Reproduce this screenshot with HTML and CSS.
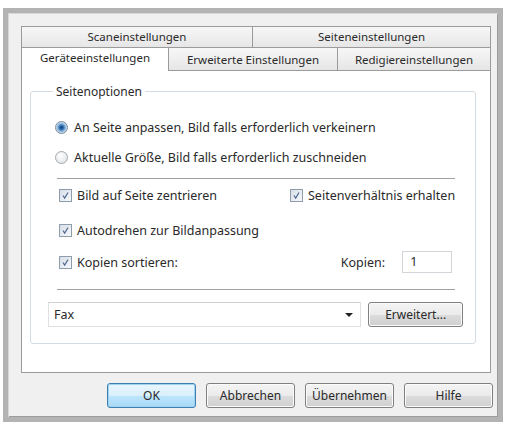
FILE: index.html
```html
<!DOCTYPE html>
<html lang="de">
<head>
    <meta charset="UTF-8">
    <meta name="viewport" content="width=device-width, initial-scale=1.0">
    <title>Druckeinstellungen</title>
    <link rel="stylesheet" href="styles.css">
</head>
<body>
<div class="window">
    <div class="tabs">
        <div class="tab-row back">
            <div class="tab scan">Scaneinstellungen</div>
            <div class="tab page">Seiteneinstellungen</div>
        </div>
        <div class="tab-row front">
            <div class="tab device active">Geräteeinstellungen</div>
            <div class="tab advanced">Erweiterte Einstellungen</div>
            <div class="tab edit">Redigiereinstellungen</div>
        </div>
    </div>

    <div class="panel">
        <fieldset class="group">
            <legend>Seitenoptionen</legend>

            <div class="options">
                <label class="radio-row first">
                    <span class="radio checked"></span>
                    An Seite anpassen, Bild falls erforderlich verkeinern
                </label>
                <label class="radio-row second">
                    <span class="radio"></span>
                    Aktuelle Größe, Bild falls erforderlich zuschneiden
                </label>

                <div class="separator top-sep"></div>

                <div class="check-grid">
                    <label class="check-row">
                        <span class="check"><svg viewBox="0 0 13 13"><path d="M3.5 6.5 L5.5 9.5 L9.5 3" /></svg></span>
                        Bild auf Seite zentrieren
                    </label>
                    <label class="check-row">
                        <span class="check"><svg viewBox="0 0 13 13"><path d="M3.5 6.5 L5.5 9.5 L9.5 3" /></svg></span>
                        Seitenverhältnis erhalten
                    </label>
                </div>

                <label class="check-row rotate">
                    <span class="check"><svg viewBox="0 0 13 13"><path d="M3.5 6.5 L5.5 9.5 L9.5 3" /></svg></span>
                    Autodrehen zur Bildanpassung
                </label>

                <div class="copies-row">
                    <label class="check-row">
                        <span class="check"><svg viewBox="0 0 13 13"><path d="M3.5 6.5 L5.5 9.5 L9.5 3" /></svg></span>
                        Kopien sortieren:
                    </label>
                    <div class="copies">
                        <span class="copies-label">Kopien:</span>
                        <span class="copies-input">1</span>
                    </div>
                </div>

                <div class="separator bottom-sep"></div>
            </div>

            <div class="printer-row">
                <div class="select">
                    <span>Fax</span>
                    <span class="arrow"></span>
                </div>
                <button class="btn more">Erweitert...</button>
            </div>
        </fieldset>
    </div>

    <div class="buttons">
        <button class="btn default">OK</button>
        <button class="btn">Abbrechen</button>
        <button class="btn">Übernehmen</button>
        <button class="btn">Hilfe</button>
    </div>
</div>
</body>
</html>
```

FILE: styles.css
```css
body {
    margin: 0;
    background: #fff;
    font-family: "Noto Sans", "Liberation Sans", sans-serif;
    font-size: 12.5px;
    color: #2a2a2a;
}

/* dialog frame */
.window {
    margin: 8px 0 0 3px;
    width: 477px;
    height: 391px;
    border: 5px solid #b3b3b3;
    box-shadow: inset 1px 1px 0 #d8d8d8, inset -1px -1px 0 #9c9c9c;
    background: #f0f0f0;
    padding: 13px 0 0 13px;
    display: flex;
    flex-direction: column;
}

/* two stacked tab rows */
.tabs { width: 470px; font-size: 11.5px; }
.tab-row { display: flex; }
.tab {
    box-sizing: border-box;
    border: 1px solid #9b9b9b;
    border-bottom: none;
    background: linear-gradient(#f7f7f7, #e6e6e6);
    text-align: center;
    white-space: nowrap;
}
.back .tab { height: 21px; line-height: 20px; }
.back .scan { width: 232px; }
.back .page { width: 238px; border-left: none; }
.front .tab { height: 23px; line-height: 23px; }
.front .device { width: 148px; }
.front .advanced { width: 169px; border-left: none; }
.front .edit { width: 153px; border-left: none; }
.front .tab.active {
    background: #fff;
    line-height: 19px;
    position: relative;
    z-index: 1;
    height: 24px;
    border-right: 1px solid #9b9b9b;
}

/* white tab page */
.panel {
    width: 470px;
    box-sizing: border-box;
    margin-top: -1px;
    border: 1px solid #9b9b9b;
    background: #fff;
    padding: 13px 14px 28px 8px;
}

.group {
    margin: 0;
    border: 1px solid #d6dde2;
    border-radius: 3px;
    padding: 18px 12px 16px 17px;
}
.group legend {
    padding: 0 3px;
    margin-left: 5px;
    line-height: 15px;
    font-size: 12px;
}

.options { margin: 0 8px 0 9px; }

.radio-row, .check-row {
    display: flex;
    align-items: center;
    height: 20px;
    white-space: nowrap;
}
.radio-row.second { margin-top: 10px; }

.radio {
    width: 13px;
    height: 13px;
    margin: 0 6px 0 -2px;
    border-radius: 50%;
    border: 1px solid #a2a9b1;
    background: radial-gradient(circle at 40% 35%, #ffffff, #d9dde2);
    box-sizing: border-box;
    flex: none;
}
.radio.checked {
    border-color: #7b8a99;
    background: radial-gradient(circle, #163a66 0, #2f6fb1 2px, #8fb8de 4px, #e6eef6 6px);
}

.separator {
    height: 1px;
    background: #a0a0a0;
    border-bottom: 1px solid #fff;
}
.top-sep { margin: 11px 0 5px; }
.bottom-sep { margin: 16px 0 11px; }

.check {
    width: 13px;
    height: 13px;
    margin: 0 5px 0 2px;
    box-sizing: border-box;
    border: 1px solid #8e9cab;
    background: linear-gradient(135deg, #d7dee7, #f7f9fb);
    flex: none;
}
.check svg { display: block; width: 11px; height: 11px; }
.check path {
    fill: none;
    stroke: #4d6690;
    stroke-width: 1.4;
}

.check-grid {
    display: grid;
    grid-template-columns: 231px auto;
}
.rotate { margin-top: 15px; }

.copies-row {
    margin-top: 11px;
    height: 22px;
    display: flex;
    align-items: center;
    justify-content: space-between;
}
.copies { display: flex; align-items: center; margin-right: 3px; }
.copies-label { margin-right: 17px; }
.copies-input {
    width: 50px;
    height: 22px;
    line-height: 20px;
    box-sizing: border-box;
    border: 1px solid #d2d6da;
    padding-left: 7px;
    background: #fff;
}

/* printer select + button */
.printer-row {
    display: flex;
    align-items: center;
    justify-content: space-between;
}
.select {
    width: 313px;
    height: 25px;
    box-sizing: border-box;
    border: 1px solid #e0e0e0;
    border-top-color: #d0d0d0;
    display: flex;
    align-items: center;
    justify-content: space-between;
    padding: 0 7px 0 5px;
    background: #fff;
}
.arrow {
    width: 0;
    height: 0;
    border-left: 4px solid transparent;
    border-right: 4px solid transparent;
    border-top: 4px solid #222;
}

.btn {
    font: inherit;
    font-size: 12px;
    color: #2a2a2a;
    height: 25px;
    border: 1px solid #808080;
    border-radius: 3px;
    background: linear-gradient(#f4f4f4 0, #ebebeb 50%, #dcdcdc 51%, #d0d0d0 100%);
    box-shadow: inset 0 0 0 1px #fbfbfb;
    padding: 0;
}
.more { width: 95px; }

/* dialog buttons */
.buttons {
    display: flex;
    justify-content: flex-end;
    gap: 10px;
    margin-top: 10px;
    width: 472px;
}
.buttons .btn { width: 89px; }
.buttons .btn.default {
    border-color: #3c7fb1;
    box-shadow: inset 0 0 0 1px #9fd3f1;
    background: linear-gradient(#eaf6fd 0, #d9f0fc 50%, #bee6fd 51%, #a7d9f5 100%);
}
```
